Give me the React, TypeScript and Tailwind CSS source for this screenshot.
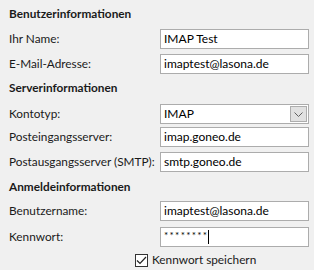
import { ReactNode } from 'react'

const FONT = { fontFamily: 'Lato, "Noto Sans", sans-serif' }

function Heading({ children, className = '' }: { children: ReactNode; className?: string }) {
  return (
    <div className={`h-[17px] flex items-center font-bold text-[11.8px] text-[#1a1a1a] ${className}`}>
      {children}
    </div>
  )
}

function Row({ label, children, className = '' }: { label: string; children: ReactNode; className?: string }) {
  return (
    <div className={`flex items-center h-[20px] ${className}`}>
      <div className="w-[151px] text-[11.8px] text-[#1a1a1a] whitespace-nowrap">{label}</div>
      <div className="w-[149px] h-full">{children}</div>
    </div>
  )
}

function TextBox({ value }: { value: string }) {
  return (
    <div className="h-full border border-[#acacac] bg-white flex items-center px-[3px] text-[12px] text-black">
      <span>{value}</span>
    </div>
  )
}

function Select({ value }: { value: string }) {
  return (
    <div className="h-full border border-[#acacac] bg-white flex items-center pl-[3px] pr-[1px] text-[12px] text-black">
      <span className="flex-1">{value}</span>
      <span className="w-[17px] h-[16px] border border-[#adadad] bg-[#e1e1e1] flex items-center justify-center">
        <svg width="9" height="5" viewBox="0 0 9 5">
          <path d="M0.5 0.5 L4.5 4.5 L8.5 0.5" fill="none" stroke="#606060" strokeWidth="1" />
        </svg>
      </span>
    </div>
  )
}

export default function App() {
  return (
    <div className="w-[314px] h-[270px] bg-[#f0f0f0] pl-[9px] pt-[5px] overflow-hidden" style={FONT}>
      <Heading>Benutzerinformationen</Heading>
      <Row label="Ihr Name:" className="mt-[7px]"><TextBox value="IMAP Test" /></Row>
      <Row label="E-Mail-Adresse:" className="mt-[5px]"><TextBox value="imaptest@lasona.de" /></Row>

      <Heading className="mt-[5px]">Serverinformationen</Heading>
      <Row label="Kontotyp:" className="mt-[8px]"><Select value="IMAP" /></Row>
      <Row label="Posteingangsserver:" className="mt-[3px]"><TextBox value="imap.goneo.de" /></Row>
      <Row label="Postausgangsserver (SMTP):" className="mt-[5px]"><TextBox value="smtp.goneo.de" /></Row>

      <Heading className="mt-[6px]">Anmeldeinformationen</Heading>
      <Row label="Benutzername:" className="mt-[6px]"><TextBox value="imaptest@lasona.de" /></Row>
      <Row label="Kennwort:" className="mt-[6px]">
        <div className="h-full border border-[#acacac] bg-white flex items-center px-[3px] text-black">
          <span className="text-[10px] tracking-[1.3px] -mt-[3px]">********</span>
          <span className="w-px h-[14px] bg-black" />
        </div>
      </Row>

      <div className="mt-[6px] h-[14px] flex items-center pl-[126px] gap-[4px] text-[11.8px] text-[#1a1a1a]">
        <span className="w-[13px] h-[13px] border border-[#333] bg-white flex items-center justify-center">
          <svg width="11" height="9" viewBox="0 0 11 9">
            <path d="M1 4.5 L4 7.5 L10 1" fill="none" stroke="#222" strokeWidth="1.2" />
          </svg>
        </span>
        <span>Kennwort speichern</span>
      </div>
    </div>
  )
}
